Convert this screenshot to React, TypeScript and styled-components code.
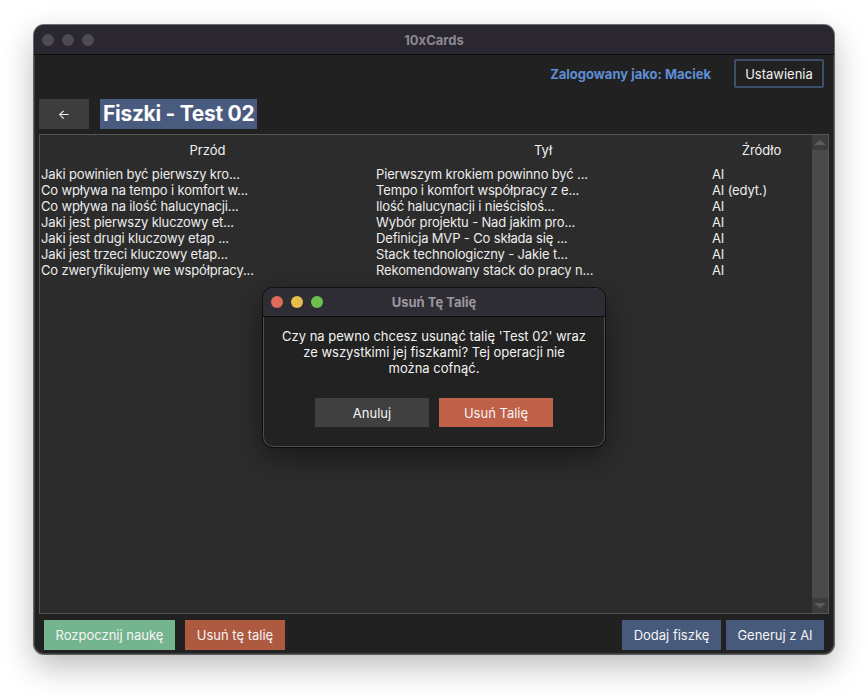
import React from "react";
import styled, { createGlobalStyle } from "styled-components";

const Global = createGlobalStyle`
  html, body { margin: 0; padding: 0; background: #ffffff; }
  body { font-family: Inter, "Noto Sans", "Liberation Sans", sans-serif; -webkit-font-smoothing: antialiased; }
  * { box-sizing: border-box; }
`;

const Desktop = styled.div`
  width: 868px;
  height: 696px;
  padding: 25px 0 0 34px;
`;

const Window = styled.div`
  position: relative;
  width: 800px;
  height: 629px;
  border-radius: 10px;
  background: #212121;
  overflow: hidden;
  display: flex;
  flex-direction: column;
  box-shadow: 0 0 0 1px rgba(0, 0, 0, 0.55), inset 0 0 0 1px rgba(255, 255, 255, 0.12),
    0 12px 32px rgba(0, 0, 0, 0.28);
`;

const TitleBar = styled.div<{ $bg: string; $h: number }>`
  position: relative;
  flex: 0 0 auto;
  height: ${(p) => p.$h}px;
  background: ${(p) => p.$bg};
  border-bottom: 1px solid #0b0b0b;
  display: flex;
  align-items: center;
  justify-content: center;
`;

const Lights = styled.div`
  position: absolute;
  left: 8px;
  top: 0;
  bottom: 0;
  display: flex;
  align-items: center;
  gap: 8px;
`;

const Light = styled.span<{ $c: string }>`
  width: 12px;
  height: 12px;
  border-radius: 50%;
  background: ${(p) => p.$c};
`;

const TitleText = styled.div<{ $c: string }>`
  font-size: 13px;
  font-weight: 700;
  color: ${(p) => p.$c};
`;

const Content = styled.div`
  flex: 1;
  display: flex;
  flex-direction: column;
  padding: 4px 5px 4px 5px;
`;

const TopBar = styled.div`
  display: flex;
  justify-content: flex-end;
  align-items: center;
  gap: 23px;
  padding-right: 5px;
  height: 29px;
`;

const UserLabel = styled.span`
  color: #5f8ed6;
  font-weight: 700;
  font-size: 13px;
`;

const OutlineButton = styled.button`
  height: 29px;
  width: 90px;
  background: #212121;
  border: 2px solid #3e4e6c;
  border-radius: 2px;
  color: #f2f2f2;
  font-family: inherit;
  font-size: 13px;
`;

const TitleRow = styled.div`
  margin-top: 11px;
  display: flex;
  align-items: center;
  gap: 11px;
  height: 30px;
`;

const BackButton = styled.button`
  width: 50px;
  height: 30px;
  background: #3d3d3d;
  border: none;
  color: #f0f0f0;
  font-family: inherit;
  font-size: 13px;
  display: flex;
  align-items: center;
  justify-content: center;
`;

const DeckTitle = styled.h1`
  margin: 0;
  height: 30px;
  line-height: 30px;
  padding: 0 3px;
  background: #4a5b80;
  color: #ffffff;
  font-size: 21px;
  font-weight: 700;
  letter-spacing: -0.3px;
`;

const Table = styled.div`
  margin-top: 5px;
  flex: 1;
  border: 1px solid #555555;
  background: #2c2c2c;
  display: flex;
`;

const TableBody = styled.div`
  flex: 1;
`;

const Grid = styled.div`
  display: grid;
  grid-template-columns: 335px 336px 1fr;
`;

const HeadCell = styled.div`
  height: 31px;
  line-height: 31px;
  text-align: center;
  color: #f2f2f2;
  font-size: 13px;
`;

const Cell = styled.div`
  height: 16px;
  line-height: 16px;
  padding-left: 1px;
  color: #ececec;
  font-size: 13px;
  letter-spacing: -0.15px;
  white-space: nowrap;
  overflow: hidden;
`;

const ScrollBar = styled.div`
  width: 16px;
  background: #4a4a4a;
  display: flex;
  flex-direction: column;
  justify-content: space-between;
`;

const ScrollArrow = styled.div<{ $down?: boolean }>`
  height: 15px;
  background: #3c3c3c;
  display: flex;
  align-items: center;
  justify-content: center;
  &::after {
    content: "";
    width: 0;
    height: 0;
    border-left: 6px solid transparent;
    border-right: 6px solid transparent;
    ${(p) =>
      p.$down ? "border-top: 5px solid #5c5c5c;" : "border-bottom: 5px solid #5c5c5c;"}
  }
`;

const BottomBar = styled.div`
  margin-top: 6px;
  display: flex;
  align-items: center;
  justify-content: space-between;
  padding: 0 5px;
  height: 30px;
`;

const ButtonGroup = styled.div<{ $gap: number }>`
  display: flex;
  gap: ${(p) => p.$gap}px;
`;

const ActionButton = styled.button<{ $bg: string; $w: number }>`
  height: 30px;
  width: ${(p) => p.$w}px;
  background: ${(p) => p.$bg};
  border: none;
  color: #f4f4f4;
  font-family: inherit;
  font-size: 13px;
`;

const Dialog = styled.div`
  position: absolute;
  left: 229px;
  top: 263px;
  width: 342px;
  height: 159px;
  border-radius: 10px;
  overflow: hidden;
  background: #222222;
  display: flex;
  flex-direction: column;
  box-shadow: 0 0 0 1px rgba(0, 0, 0, 0.6), inset 0 0 0 1px rgba(255, 255, 255, 0.2),
    0 10px 30px rgba(0, 0, 0, 0.45);
`;

const DialogBody = styled.div`
  padding: 11px 16px 0;
  display: flex;
  flex-direction: column;
  align-items: center;
`;

const Message = styled.p`
  margin: 0;
  text-align: center;
  color: #f2f2f2;
  font-size: 13px;
  line-height: 16px;
`;

const DialogButtons = styled.div`
  margin-top: 22px;
  display: flex;
  gap: 10px;
`;

const DialogButton = styled.button<{ $bg: string }>`
  width: 114px;
  height: 29px;
  border: none;
  background: ${(p) => p.$bg};
  color: #f4f4f4;
  font-family: inherit;
  font-size: 13px;
`;

const rows = [
  ["Jaki powinien być pierwszy kro...", "Pierwszym krokiem powinno być ...", "AI"],
  ["Co wpływa na tempo i komfort w...", "Tempo i komfort współpracy z e...", "AI (edyt.)"],
  ["Co wpływa na ilość halucynacji...", "Ilość halucynacji i nieścisłoś...", "AI"],
  ["Jaki jest pierwszy kluczowy et...", "Wybór projektu - Nad jakim pro...", "AI"],
  ["Jaki jest drugi kluczowy etap ...", "Definicja MVP - Co składa się ...", "AI"],
  ["Jaki jest trzeci kluczowy etap...", "Stack technologiczny - Jakie t...", "AI"],
  ["Co zweryfikujemy we współpracy...", "Rekomendowany stack do pracy n...", "AI"],
];

export default function App() {
  return (
    <>
      <Global />
      <Desktop>
        <Window>
          <TitleBar $bg="#2a2731" $h={30}>
            <Lights>
              <Light $c="#4d4a56" />
              <Light $c="#4d4a56" />
              <Light $c="#4d4a56" />
            </Lights>
            <TitleText $c="#8a8791">10xCards</TitleText>
          </TitleBar>
          <Content>
            <TopBar>
              <UserLabel>Zalogowany jako: Maciek</UserLabel>
              <OutlineButton>Ustawienia</OutlineButton>
            </TopBar>
            <TitleRow>
              <BackButton>←</BackButton>
              <DeckTitle>Fiszki - Test 02</DeckTitle>
            </TitleRow>
            <Table>
              <TableBody>
                <Grid>
                  <HeadCell>Przód</HeadCell>
                  <HeadCell>Tył</HeadCell>
                  <HeadCell>Źródło</HeadCell>
                  {rows.map((r, i) => (
                    <React.Fragment key={i}>
                      <Cell>{r[0]}</Cell>
                      <Cell>{r[1]}</Cell>
                      <Cell>{r[2]}</Cell>
                    </React.Fragment>
                  ))}
                </Grid>
              </TableBody>
              <ScrollBar>
                <ScrollArrow />
                <ScrollArrow $down />
              </ScrollBar>
            </Table>
            <BottomBar>
              <ButtonGroup $gap={10}>
                <ActionButton $bg="#74b48f" $w={131}>Rozpocznij naukę</ActionButton>
                <ActionButton $bg="#ad5a41" $w={100}>Usuń tę talię</ActionButton>
              </ButtonGroup>
              <ButtonGroup $gap={5}>
                <ActionButton $bg="#485a7b" $w={99}>Dodaj fiszkę</ActionButton>
                <ActionButton $bg="#485a7b" $w={98}>Generuj z AI</ActionButton>
              </ButtonGroup>
            </BottomBar>
          </Content>
          <Dialog>
            <TitleBar $bg="#2f2d34" $h={29}>
              <Lights>
                <Light $c="#df6b5a" />
                <Light $c="#e6bf4a" />
                <Light $c="#6cc04b" />
              </Lights>
              <TitleText $c="#9a97a0">Usuń Tę Talię</TitleText>
            </TitleBar>
            <DialogBody>
              <Message>
                Czy na pewno chcesz usunąć talię 'Test 02' wraz
                <br />
                ze wszystkimi jej fiszkami? Tej operacji nie
                <br />
                można cofnąć.
              </Message>
              <DialogButtons>
                <DialogButton $bg="#404040">Anuluj</DialogButton>
                <DialogButton $bg="#c0624a">Usuń Talię</DialogButton>
              </DialogButtons>
            </DialogBody>
          </Dialog>
        </Window>
      </Desktop>
    </>
  );
}
